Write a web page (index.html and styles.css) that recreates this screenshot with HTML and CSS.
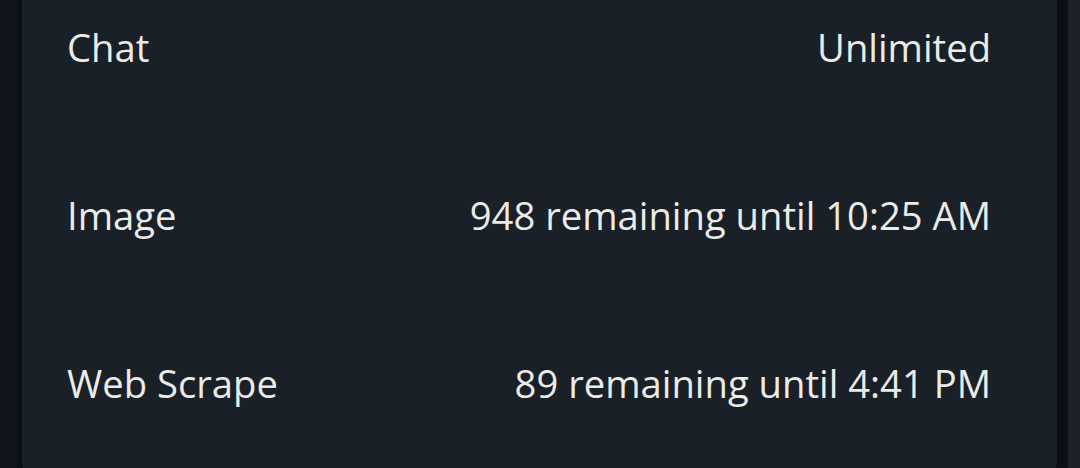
FILE: index.html
```html
<!DOCTYPE html>
<html lang="en">
<head>
<meta charset="utf-8">
<title>Usage limits</title>
<link rel="stylesheet" href="styles.css">
</head>
<body>
  <div class="screen">
    <div class="edge edge-outer"></div>
    <div class="edge edge-inner"></div>
    <section class="card">
      <div class="row">
        <span class="label">Chat</span>
        <span class="value">Unlimited</span>
      </div>
      <div class="row">
        <span class="label">Image</span>
        <span class="value">948 remaining until 10:25 AM</span>
      </div>
      <div class="row">
        <span class="label">Web Scrape</span>
        <span class="value">89 remaining until 4:41 PM</span>
      </div>
    </section>
    <div class="edge edge-inner edge-right"></div>
    <div class="edge edge-panel"></div>
  </div>
</body>
</html>
```

FILE: styles.css
```css
html, body {
  margin: 0;
  padding: 0;
  width: 1080px;
  height: 468px;
  overflow: hidden;
  background: #0b1016;
}

.screen {
  display: flex;
  height: 468px;
}

.edge {
  flex: none;
  height: 100%;
}

.edge-outer {
  width: 17px;
  background: #0f151b;
}

.edge-inner {
  width: 5px;
  background: #0a1016;
}

.edge-right {
  width: 11px;
}

.edge-panel {
  width: 12px;
  background: #1d2228;
}

/* Limits card; its rounded top sits just above the visible area */
.card {
  flex: 1;
  margin-top: -30px;
  height: 520px;
  background: #1a2027;
  border-radius: 30px;
  padding: 0 66px 0 45px;
  box-sizing: border-box;
  font-family: "Open Sans", "Noto Sans", sans-serif;
  font-size: 38.2px;
  color: #ebebe7;
}

.row {
  display: flex;
  justify-content: space-between;
  align-items: baseline;
  height: 168px;
  line-height: 1;
}

.row span {
  display: block;
  margin-top: 58px;
}
```
